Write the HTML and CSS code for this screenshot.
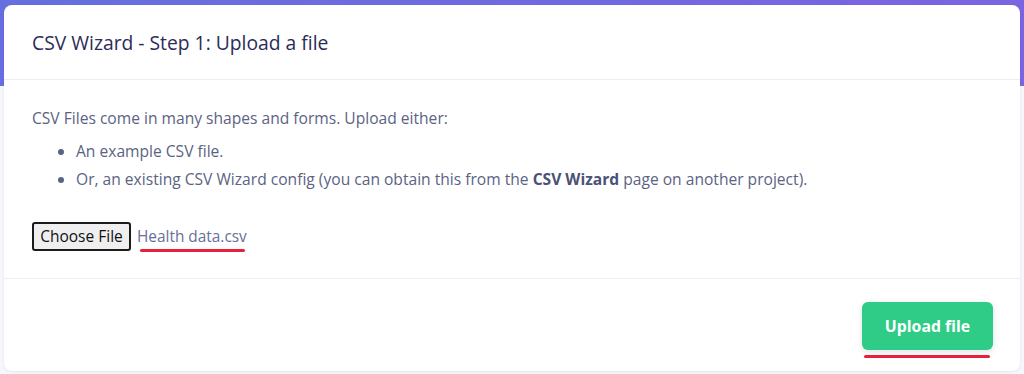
FILE: index.html
```html
<!DOCTYPE html>
<html lang="en">
<head>
<meta charset="utf-8">
<title>CSV Wizard</title>
<link rel="stylesheet" href="styles.css">
</head>
<body>
<div class="page">
  <div class="card">
    <div class="card-header">
      <h1 class="title">CSV Wizard - Step 1: Upload a file</h1>
    </div>
    <div class="card-body">
      <p class="intro">CSV Files come in many shapes and forms. Upload either:</p>
      <ul class="options">
        <li>An example CSV file.</li>
        <li>Or, an existing CSV Wizard config (you can obtain this from the <strong>CSV Wizard</strong> page on another project).</li>
      </ul>
      <div class="file-row">
        <button class="choose-btn" type="button">Choose File</button>
        <span class="file-name">Health data.csv</span>
      </div>
    </div>
    <div class="card-footer">
      <button class="upload-btn" type="button">Upload file</button>
    </div>
  </div>
</div>
</body>
</html>
```

FILE: styles.css
```css
* { box-sizing: border-box; }
html, body { margin: 0; padding: 0; }
body {
  font-family: "Open Sans", "Liberation Sans", sans-serif;
  background: #f6f7fb;
  width: 1024px;
  height: 374px;
  overflow: hidden;
}
.page {
  height: 374px;
  padding: 5px 4px 0 4px;
  background:
    linear-gradient(90deg, #666fe0 0%, #7b64e2 100%) top left / 100% 86px no-repeat,
    #f6f7fb;
}
.card {
  background: #fff;
  border-radius: 8px;
  box-shadow: 0 1px 3px rgba(40, 45, 90, 0.08);
  height: 366px;
  display: flex;
  flex-direction: column;
}
.card-header {
  height: 75px;
  padding: 0 28px;
  display: flex;
  align-items: center;
  border-bottom: 1px solid #eceef3;
}
.title {
  margin: 0;
  font-size: 19.3px;
  font-weight: 500;
  color: #2b2c58;
  letter-spacing: 0;
}
.card-body {
  padding: 24px 28px 0 28px;
  height: 199px;
  border-bottom: 1px solid #eceef3;
  color: #5b6383;
  font-size: 15.6px;
  line-height: 28px;
}
.intro { margin: 0 0 5px 0; }
.options {
  margin: 0;
  padding-left: 44px;
}
.options strong { color: #4a5276; font-weight: 700; }
.file-row {
  margin-top: 29px;
  display: flex;
  align-items: center;
  gap: 6px;
}
.choose-btn {
  font-family: "Open Sans", "Liberation Sans", sans-serif;
  font-size: 15.5px;
  color: #111;
  background: #efefef;
  border: 2px solid #1b1b1b;
  border-radius: 3px;
  height: 29px;
  width: 99px;
  padding: 0;
  line-height: 25px;
}
.file-name {
  position: relative;
  color: #67709a;
  font-size: 15.4px;
  line-height: 29px;
}
.file-name::after {
  content: "";
  position: absolute;
  left: 3px;
  right: 2px;
  bottom: -1px;
  height: 3px;
  background: #e8203c;
  border-radius: 2px;
}
.card-footer {
  flex: 1;
  display: flex;
  justify-content: flex-end;
  align-items: flex-start;
  padding: 23px 27px 0 0;
}
.upload-btn {
  position: relative;
  font-family: "Open Sans", "Liberation Sans", sans-serif;
  font-size: 15.8px;
  font-weight: 700;
  color: #fff;
  background: #2ecc87;
  border: none;
  border-radius: 6px;
  width: 131px;
  height: 48px;
  box-shadow: 0 2px 6px rgba(40, 60, 90, 0.15);
}
.upload-btn::after {
  content: "";
  position: absolute;
  left: 2px;
  right: 3px;
  bottom: -8px;
  height: 3px;
  background: #e8203c;
  border-radius: 2px;
}
```
